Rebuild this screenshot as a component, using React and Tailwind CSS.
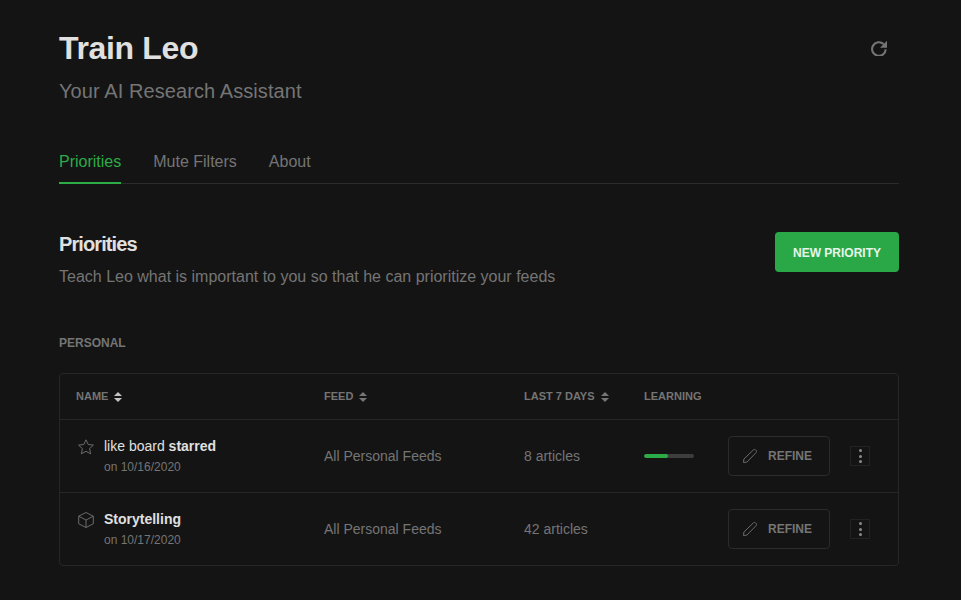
const SortIcon = ({ active }) => (
  <svg width="8" height="10" viewBox="0 0 8 10" className="ml-[6px]">
    <path d="M4 0L8 4H0z M4 10L0 6H8z" fill={active ? "#c4c4c4" : "#757575"} />
  </svg>
);

const RefreshIcon = () => (
  <svg width="16" height="16" viewBox="0 0 16 16" fill="none" className="mr-[12px] mt-[12px]">
    <path d="M12.6 4.1A6.8 6.8 0 1 0 14.7 9.4" stroke="#757575" strokeWidth="2.1" />
    <path d="M16 0.8V7.8H9z" fill="#757575" />
  </svg>
);

const StarIcon = () => (
  <svg width="16" height="16" viewBox="0 0 16 16" fill="none" stroke="#757575" strokeWidth="0.9" strokeLinejoin="round">
    <path d="M8 0.8L10.2 5.5L15.4 6.1L11.6 9.6L12.6 14.8L8 12.3L3.4 14.8L4.4 9.6L0.6 6.1L5.8 5.5z" />
  </svg>
);

const BoxIcon = () => (
  <svg width="16" height="16" viewBox="0 0 16 16" fill="none" stroke="#757575" strokeWidth="0.9" strokeLinejoin="round">
    <path d="M8 0.5L15.3 4.2V11.8L8 15.5L0.7 11.8V4.2z M0.7 4.2L8 8L15.3 4.2 M8 8V15.5" />
  </svg>
);

const PencilIcon = () => (
  <svg width="14" height="14" viewBox="0 0 14 14" fill="none" stroke="#757575" strokeWidth="0.9" strokeLinejoin="round" className="mr-[11px]">
    <path d="M0.5 13.5L0.9 10L10.4 0.9C11 0.3 11.9 0.3 12.6 0.9L13.1 1.4C13.7 2.1 13.7 3 13.1 3.6L3.9 13.1z" />
  </svg>
);

const HeaderCell = ({ label, sort, active, className }) => (
  <div className={`flex items-center text-[11px] font-bold text-[#757575] ${className}`}>
    {label}
    {sort && <SortIcon active={active} />}
  </div>
);

const Row = ({ icon, title, date, articles, progress, border }) => (
  <div className={`flex items-center ${border ? "h-[73px] border-b border-[#262626]" : "h-[72px]"}`}>
    <div className="flex w-[264px] pl-[18px]">
      <div className="w-[26px] pt-[2px]">{icon}</div>
      <div>
        <div className="text-[14px] leading-[18px] text-[#e0e0e0]">{title}</div>
        <div className="mt-[4px] text-[12px] leading-[16px] text-[#757575]">{date}</div>
      </div>
    </div>
    <div className="w-[200px] text-[14px] text-[#757575]">All Personal Feeds</div>
    <div className="w-[120px] text-[14px] text-[#757575]">{articles}</div>
    <div className="w-[84px]">
      {progress && (
        <div className="h-[4px] w-[50px] overflow-hidden rounded-full bg-[#3d3d3d]">
          <div className="h-full w-[24px] rounded-full bg-[#2bac47]" />
        </div>
      )}
    </div>
    <button className="flex h-[40px] w-[102px] items-center rounded border border-[#2b2b2b] pl-[14px] text-[12px] font-bold text-[#757575]">
      <PencilIcon />
      REFINE
    </button>
    <div className="ml-[20px] flex h-[20px] w-[20px] flex-col items-center justify-center gap-[2.5px] border border-[#222222]">
      <span className="h-[3px] w-[3px] rounded-full bg-[#8a8a8a]" />
      <span className="h-[3px] w-[3px] rounded-full bg-[#8a8a8a]" />
      <span className="h-[3px] w-[3px] rounded-full bg-[#8a8a8a]" />
    </div>
  </div>
);

export default function App() {
  return (
    <div className="h-[600px] overflow-hidden bg-[#141414] pl-[59px] pr-[62px] font-['Liberation_Sans',Arial,sans-serif]">
      <div className="flex items-start justify-between pt-[28px]">
        <div>
          <h1 className="text-[32px] font-bold leading-[40px] tracking-[-0.35px] text-[#e0e0e0]">Train Leo</h1>
          <p className="mt-[10px] text-[20px] leading-[26px] tracking-[0.08px] text-[#757575]">Your AI Research Assistant</p>
        </div>
        <RefreshIcon />
      </div>

      <div className="mt-[35px] flex h-[45px] gap-[32px] border-b border-[#2b2b2b] text-[16px] text-[#757575]">
        <div className="-mb-px border-b-2 border-[#2bac47] pt-[11px] text-[#2bac47]">Priorities</div>
        <div className="pt-[11px]">Mute Filters</div>
        <div className="pt-[11px]">About</div>
      </div>

      <div className="mt-[48px] flex items-start justify-between">
        <div>
          <h2 className="-mt-px text-[20px] font-bold leading-[26px] tracking-[-0.9px] text-[#e0e0e0]">Priorities</h2>
          <p className="mt-[8px] text-[16px] leading-[24px] text-[#757575]">
            Teach Leo what is important to you so that he can prioritize your feeds
          </p>
        </div>
        <button className="flex h-[40px] w-[124px] items-center justify-center rounded bg-[#2aa847] pt-[2px] text-[12px] font-bold text-[#e6f5e9]">
          NEW PRIORITY
        </button>
      </div>

      <div className="mt-[46px] text-[12px] font-bold leading-[16px] text-[#757575]">PERSONAL</div>

      <div className="mt-[22px] rounded border border-[#262626]">
        <div className="flex h-[46px] items-center border-b border-[#262626]">
          <HeaderCell label="NAME" sort active className="w-[264px] pl-[16px]" />
          <HeaderCell label="FEED" sort className="w-[200px]" />
          <HeaderCell label="LAST 7 DAYS" sort className="w-[120px]" />
          <HeaderCell label="LEARNING" className="w-[120px]" />
        </div>
        <Row
          icon={<StarIcon />}
          title={<>like board <b>starred</b></>}
          date="on 10/16/2020"
          articles="8 articles"
          progress
          border
        />
        <Row
          icon={<BoxIcon />}
          title={<b>Storytelling</b>}
          date="on 10/17/2020"
          articles="42 articles"
        />
      </div>
    </div>
  );
}
